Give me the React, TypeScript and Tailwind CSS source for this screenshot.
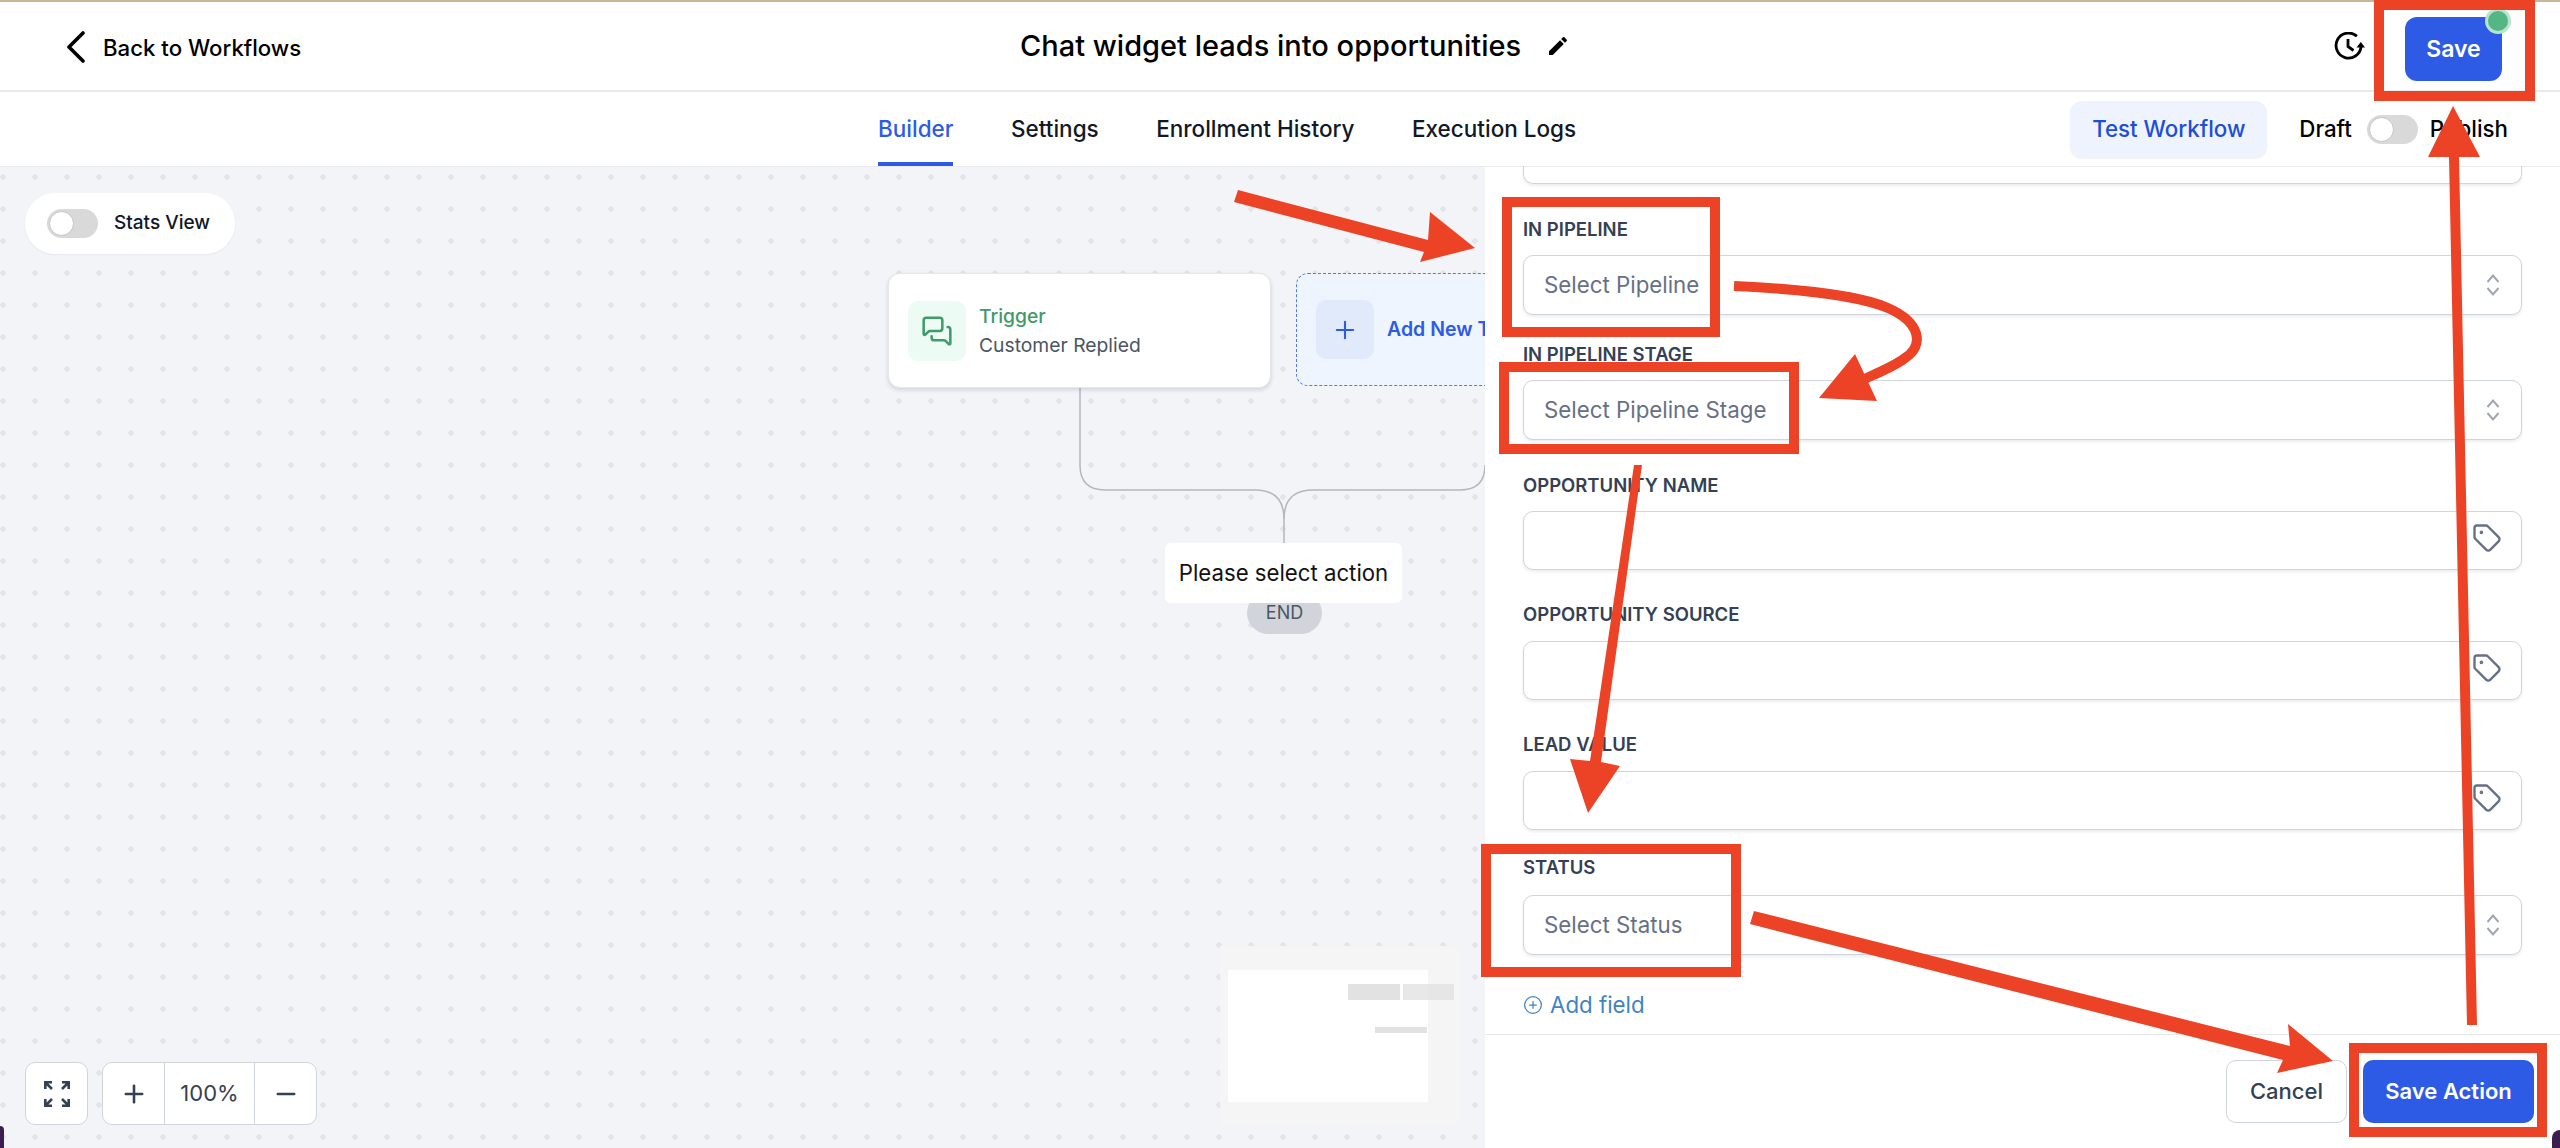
import { MessagesSquare, Plus, Minus, Tag, CirclePlus } from 'lucide-react';
import { MdEdit } from 'react-icons/md';

function Toggle() {
  return (
    <div className="flex h-[29px] w-[51px] items-center rounded-full bg-[#d9d9d9] pl-[2px]">
      <div className="h-[25px] w-[25px] rounded-full border border-[#c4c4c4] bg-white" />
    </div>
  );
}

function SelectField({ placeholder }: { placeholder: string }) {
  return (
    <div className="flex h-[60px] items-center justify-between rounded-[10px] border border-[#d0d5dd] bg-white pl-[20px] pr-[21px] shadow-[0_2px_3px_rgba(16,24,40,0.08)]">
      <span className="text-[22.3px] text-[#667085]">{placeholder}</span>
      <svg width="14" height="24" viewBox="0 0 14 24" fill="none" stroke="#a0a6b3" strokeWidth="2">
        <path d="M1.5 9L7 2.5L12.5 9" />
        <path d="M1.5 15L7 21.5L12.5 15" />
      </svg>
    </div>
  );
}

function TagField() {
  return (
    <div className="flex h-[59px] items-center justify-end rounded-[10px] border border-[#d0d5dd] bg-white pb-[6px] pr-[19px] shadow-[0_2px_3px_rgba(16,24,40,0.08)]">
      <Tag className="h-[30px] w-[30px] text-[#667085]" strokeWidth={1.9} />
    </div>
  );
}

function FieldLabel({ text }: { text: string }) {
  return <div className="mb-[16px] h-[20px] text-[18.5px] font-semibold uppercase leading-[20px] text-[#344054]">{text}</div>;
}

function Canvas() {
  return (
    <div className="relative flex-1 overflow-hidden bg-[#f2f4f8] bg-[radial-gradient(circle,#e4e5e8_2.5px,transparent_3px)] bg-[length:32px_32px] bg-[position:-13px_-6px]">
      {/* edges */}
      <svg className="absolute left-0 top-0" width="1485" height="981" fill="none" stroke="#b4b7bd" strokeWidth="1.5">
        <path d="M1080 221V298Q1080 323 1105 323H1255Q1284 323 1284 352V376" />
        <path d="M1284 352Q1284 323 1313 323H1460Q1485 323 1485 298" />
      </svg>

      {/* stats toggle */}
      <div className="absolute left-[25px] top-[26px] flex h-[61px] w-[210px] items-center gap-[16px] rounded-[30px] bg-white pl-[22px] shadow-[0_1px_2px_rgba(16,24,40,0.05)]">
        <Toggle />
        <span className="text-[19px] font-medium text-[#111827]">Stats View</span>
      </div>

      {/* trigger node */}
      <div className="absolute left-[888px] top-[106px] flex h-[115px] w-[383px] items-center gap-[13px] rounded-[12px] border border-[#e5e7eb] bg-white pl-[19px] shadow-[0_2px_4px_rgba(16,24,40,0.15)]">
        <div className="flex h-[60px] w-[58px] items-center justify-center rounded-[10px] bg-[#ecfbf3]">
          <MessagesSquare className="h-[32px] w-[32px] text-[#3f9a6c]" strokeWidth={1.9} />
        </div>
        <div className="flex flex-col gap-[5px]">
          <span className="text-[19.3px] font-medium leading-[24px] text-[#3f9a6c]">Trigger</span>
          <span className="text-[19.3px] leading-[24px] text-[#4b5563]">Customer Replied</span>
        </div>
      </div>

      {/* add trigger node */}
      <div className="absolute left-[1296px] top-[106px] flex h-[113px] w-[300px] items-center gap-[13px] rounded-[12px] border border-dashed border-[#4f7be8] bg-[#eff5fe] pl-[19px]">
        <div className="flex h-[59px] w-[58px] items-center justify-center rounded-[10px] bg-[#e0eafb]">
          <Plus className="h-[28px] w-[28px] text-[#2e5be6]" strokeWidth={1.8} />
        </div>
        <span className="whitespace-nowrap text-[19.5px] font-semibold text-[#2e5be6]">Add New Trigger</span>
      </div>

      {/* end */}
      <div className="absolute left-[1247px] top-[425px] flex h-[42px] w-[75px] items-end justify-center rounded-full bg-[#d1d5db] pb-[9px] text-[18px] leading-[24px] text-[#4b5563]">END</div>
      <div className="absolute left-[1165px] top-[376px] flex h-[60px] w-[237px] items-center justify-center rounded-[6px] bg-white pb-[1px] text-[22.2px] text-[#111]">Please select action</div>

      {/* zoom controls */}
      <div className="absolute bottom-[23px] left-[25px] flex h-[63px] w-[63px] items-center justify-center rounded-[10px] border border-[#d0d5dd] bg-white">
        <svg width="26" height="26" viewBox="0 0 26 26" fill="none" stroke="#344054" strokeWidth="2.6">
          <path d="M1.3 8V1.3H8M1.5 1.5L8 8" />
          <path d="M24.7 8V1.3H18M24.5 1.5L18 8" />
          <path d="M1.3 18V24.7H8M1.5 24.5L8 18" />
          <path d="M24.7 18V24.7H18M24.5 24.5L18 18" />
        </svg>
      </div>
      <div className="absolute bottom-[23px] left-[102px] flex h-[63px] w-[215px] divide-x divide-[#d0d5dd] rounded-[10px] border border-[#d0d5dd] bg-white text-[#344054]">
        <div className="flex w-[62px] items-center justify-center">
          <Plus className="h-[28px] w-[28px]" strokeWidth={2.2} />
        </div>
        <div className="flex w-[90px] items-center justify-center text-[22px]">100%</div>
        <div className="flex flex-1 items-center justify-center">
          <Minus className="h-[28px] w-[28px]" strokeWidth={2.2} />
        </div>
      </div>

      {/* minimap */}
      <div className="absolute bottom-[22px] left-[1220px] h-[180px] w-[242px] bg-[#f5f5f5]/90">
        <div className="absolute left-[8px] top-[24px] h-[132px] w-[200px] bg-white" />
        <div className="absolute left-[128px] top-[38px] h-[16px] w-[52px] bg-[#e2e2e2]" />
        <div className="absolute left-[183px] top-[38px] h-[16px] w-[51px] bg-[#e2e2e2]/80" />
        <div className="absolute left-[155px] top-[81px] h-[6px] w-[52px] bg-[#e2e2e2]" />
      </div>
    </div>
  );
}

function SidePanel() {
  return (
    <div className="flex w-[1075px] flex-col bg-white">
      <div className="flex-1 px-[38px]">
        <div className="-mt-[1px] h-[18px] rounded-b-[10px] border border-t-0 border-[#d0d5dd] shadow-[0_2px_3px_rgba(16,24,40,0.08)]" />
        <div className="mt-[35px]">
          <FieldLabel text="In Pipeline" />
          <SelectField placeholder="Select Pipeline" />
        </div>
        <div className="mt-[29px]">
          <FieldLabel text="In Pipeline Stage" />
          <SelectField placeholder="Select Pipeline Stage" />
        </div>
        <div className="mt-[35px]">
          <FieldLabel text="Opportunity Name" />
          <TagField />
        </div>
        <div className="mt-[34px]">
          <FieldLabel text="Opportunity Source" />
          <div className="mt-[17px]">
            <TagField />
          </div>
        </div>
        <div className="mt-[34px]">
          <FieldLabel text="Lead Value" />
          <div className="mt-[17px]">
            <TagField />
          </div>
        </div>
        <div className="mt-[27px]">
          <FieldLabel text="Status" />
          <div className="mt-[18px]">
            <SelectField placeholder="Select Status" />
          </div>
        </div>
        <div className="mt-[35px] flex items-center gap-[7px] text-[22.3px] leading-[30px] text-[#3f83c4]">
          <CirclePlus className="h-[20px] w-[20px]" strokeWidth={1.5} />
          Add field
        </div>
      </div>
      <div className="flex h-[114px] items-start justify-end gap-[16px] border-t border-[#e5e7eb] pr-[26px] pt-[25px]">
        <div className="flex h-[63px] w-[121px] items-center justify-center rounded-[10px] border border-[#d0d5dd] bg-white text-[22px] font-medium text-[#344054]">Cancel</div>
        <div className="flex h-[63px] w-[171px] items-center justify-center rounded-[10px] bg-[#2e5be6] text-[22px] font-semibold text-white">Save Action</div>
      </div>
    </div>
  );
}

export default function App() {
  return (
    <div className="relative flex h-[1148px] w-[2560px] flex-col overflow-hidden bg-white font-['Inter',sans-serif]">
      <div className="h-[2px] bg-[#c8b696]" />

      {/* Header */}
      <div className="flex h-[90px] items-center border-b-2 border-[#e8eaed] pr-[58px]">
        <div className="flex w-[1020px] items-center pl-[66px] pt-[3px]">
          <svg width="20" height="32" viewBox="0 0 20 32" fill="none" stroke="#000" strokeWidth="3.6" strokeLinecap="round" strokeLinejoin="round">
            <path d="M17 2L3 16L17 30" />
          </svg>
          <span className="ml-[17px] text-[22.2px] font-medium text-black">Back to Workflows</span>
        </div>
        <span className="text-[29px] font-medium text-black">Chat widget leads into opportunities</span>
        <MdEdit className="ml-[25px] h-[24px] w-[24px] text-black" />
        <svg className="ml-auto" width="32" height="28" viewBox="0 0 32 28" fill="none" stroke="#000" strokeWidth="2.8">
          <path d="M27 15A12.5 12.5 0 1 1 22 3.5" strokeLinecap="round" />
          <path d="M14 7V14.5L19.5 18.5" />
          <path d="M22.5 15.5H31L26.8 10Z" fill="#000" stroke="none" />
        </svg>
        <div className="relative ml-[39px] mt-[6px] flex h-[64px] w-[97px] items-center justify-center rounded-[12px] bg-[#2e5be6] text-[23px] font-semibold text-white">
          Save
          <div className="absolute -right-[9px] -top-[9px] h-[26px] w-[26px] rounded-full border-[3px] border-[#b5e5cb] bg-[#54b585]" />
        </div>
      </div>

      {/* Tabs */}
      <div className="flex h-[75px] items-stretch border-b border-[#e8eaed] pl-[878px] pr-[52px]">
        <div className="flex gap-[57.5px] text-[22.5px] font-medium text-[#111827]">
          <div className="flex items-center border-b-4 border-[#2e5be6] pt-[4px] text-[#2e5be6]">Builder</div>
          <div className="flex items-center">Settings</div>
          <div className="flex items-center">Enrollment History</div>
          <div className="flex items-center">Execution Logs</div>
        </div>
        <div className="ml-auto flex items-center">
          <div className="flex h-[57px] w-[197px] items-center justify-center rounded-[12px] bg-[#eff3fd] text-[22.3px] font-medium text-[#1d4ed8] shadow-[0_1px_2px_rgba(16,24,40,0.06)]">Test Workflow</div>
          <span className="ml-[32px] text-[22.3px] font-medium text-black">Draft</span>
          <div className="ml-[15px]">
            <Toggle />
          </div>
          <span className="ml-[12px] text-[22.3px] font-medium text-black">Publish</span>
        </div>
      </div>

      {/* Body */}
      <div className="flex min-h-0 flex-1">
        <Canvas />
        <SidePanel />
      </div>

      {/* Annotation arrows and boxes */}
      <svg className="pointer-events-none absolute left-0 top-0" width="2560" height="1148" fill="none">
        <g stroke="#ec4326" strokeWidth="10">
          <rect x="1507" y="202" width="208" height="130" />
          <rect x="1504" y="367" width="290" height="82" />
          <rect x="1486" y="849" width="250" height="123" />
          <rect x="2354" y="1048" width="188" height="84" />
          <rect x="2379" y="5" width="151" height="91" />
          <path d="M1734 286C1800 289 1860 296 1888 308C1920 322 1925 345 1905 358C1895 366 1880 372 1862 380" />
        </g>
        <g fill="#ec4326">
          <path d="M1819 398L1855 354L1877 401Z" />
          <path d="M1238 190L1428 240L1430 212L1475 248L1420 262L1424 252L1234 202Z" />
          <path d="M1634 465L1642 465L1601 762L1620 766L1588 813L1570 759L1590 761Z" />
          <path d="M1754 911L2290 1046L2288 1024L2333 1061L2277 1073L2283 1060L1750 924Z" />
          <path d="M2467 1025L2477 1025L2459 157L2480 157L2453 106L2428 157L2449 157Z" />
        </g>
      </svg>

      {/* window corners */}
      <div className="absolute bottom-0 left-0 h-[22px] w-[4px] rounded-tr-[20px] bg-[#3b1d4f]" />
      <div className="absolute bottom-0 right-0 h-[18px] w-[8px] rounded-tl-[20px] bg-[#3b1d4f]" />
    </div>
  );
}
